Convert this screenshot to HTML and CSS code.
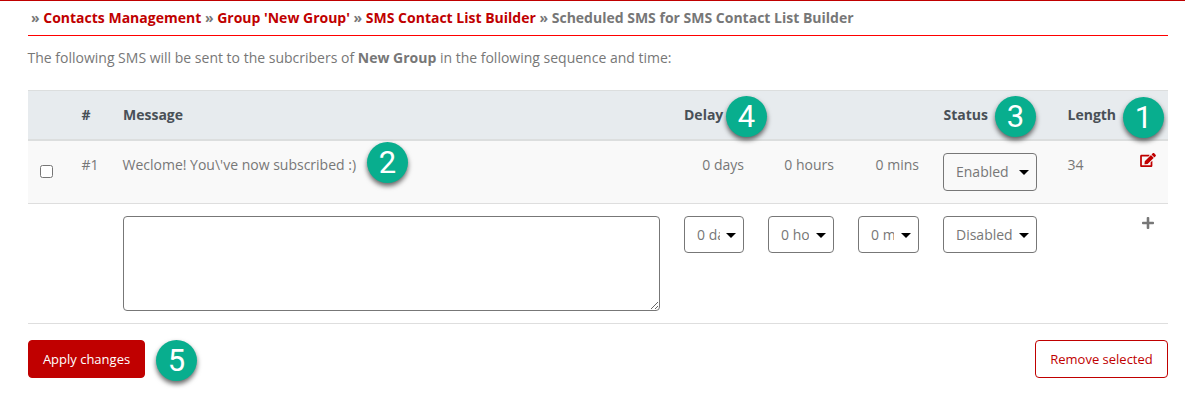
FILE: index.html
```html
<!DOCTYPE html>
<html lang="en">
<head>
<meta charset="utf-8">
<title>Scheduled SMS</title>
<link rel="stylesheet" href="styles.css">
</head>
<body>
<main class="page">
  <nav class="crumbs">» <a>Contacts Management</a> » <a>Group 'New Group'</a> » <a>SMS Contact List Builder</a> » Scheduled SMS for SMS Contact List Builder</nav>
  <p class="intro">The following SMS will be sent to the subcribers of <b>New Group</b> in the following sequence and time:</p>
  <table class="list">
    <colgroup><col class="c-check"><col class="c-num"><col class="c-msg"><col class="c-days"><col class="c-hours"><col class="c-mins"><col class="c-status"><col class="c-len"><col class="c-act"></colgroup>
    <thead>
      <tr><th></th><th>#</th><th>Message</th><th colspan="3">Delay</th><th>Status</th><th>Length</th><th></th></tr>
    </thead>
    <tbody>
      <tr class="row-saved">
        <td><span class="check"></span></td>
        <td>#1</td>
        <td>Weclome! You\'ve now subscribed :)</td>
        <td class="right">0 days</td>
        <td class="right">0 hours</td>
        <td class="right">0 mins</td>
        <td><div class="select select-status tall"><span>Enabled</span></div></td>
        <td>34</td>
        <td class="action"><svg class="edit" viewBox="0 0 576 512"><path d="M402.6 83.2l90.2 90.2c3.800 3.800 3.800 10 0 13.800L274.400 405.600l-92.800 10.300c-12.400 1.400-22.900-9.100-21.500-21.500l10.300-92.800L388.800 83.200c3.800-3.800 10-3.800 13.800 0zm162-22.900l-48.800-48.800c-15.200-15.200-39.900-15.200-55.200 0l-35.400 35.400c-3.800 3.800-3.800 10 0 13.800l90.200 90.200c3.800 3.800 10 3.800 13.800 0l35.400-35.400c15.200-15.300 15.200-40 0-55.200zM384 346.200V448H64V128h229.800c3.200 0 6.200-1.300 8.500-3.500l40-40c7.600-7.600 2.200-20.500-8.500-20.500H48C21.500 64 0 85.500 0 112v352c0 26.500 21.500 48 48 48h352c26.500 0 48-21.500 48-48V306.200c0-10.700-12.900-16-20.500-8.500l-40 40c-2.200 2.300-3.500 5.300-3.500 8.500z"/></svg></td>
      </tr>
      <tr class="row-new">
        <td></td><td></td>
        <td><textarea class="message" aria-label="Message"></textarea></td>
        <td><div class="select select-days"><span>0 days</span></div></td>
        <td><div class="select select-hours"><span>0 hours</span></div></td>
        <td><div class="select select-mins"><span>0 mins</span></div></td>
        <td><div class="select select-status"><span>Disabled</span></div></td>
        <td></td>
        <td class="action"><svg class="plus" viewBox="0 0 448 448"><path d="M416 176H272V32c0-17.700-14.300-32-32-32h-32c-17.700 0-32 14.300-32 32v144H32c-17.700 0-32 14.300-32 32v32c0 17.700 14.300 32 32 32h144v144c0 17.700 14.300 32 32 32h32c17.700 0 32-14.300 32-32V272h144c17.700 0 32-14.300 32-32v-32c0-17.700-14.300-32-32-32z"/></svg></td>
      </tr>
    </tbody>
  </table>
  <div class="buttons"><button class="btn primary">Apply changes</button><button class="btn outline">Remove selected</button></div>
  <span class="badge b1">1</span>
  <span class="badge b2">2</span>
  <span class="badge b3">3</span>
  <span class="badge b4">4</span>
  <span class="badge b5">5</span>
</main>
</body>
</html>
```
FILE: styles.css
```css
* { box-sizing: border-box; }
body { margin: 0; background: #fff; color: #777; font: 14px/24px "Open Sans", "Noto Sans", sans-serif; }
.page { position: relative; height: 413px; border-top: 1px solid #c00000; padding: 0 17px 0 28px; overflow: hidden; }
.crumbs { height: 35px; padding: 5px 0 0 3px; border-bottom: 1px solid #f00; font-weight: 700; white-space: nowrap; }
.crumbs a { color: #c00000; }
.intro { margin: 10px 0 20px; text-indent: -.5px; white-space: nowrap; }
.list { width: 1140px; table-layout: fixed; border-collapse: separate; border-spacing: 0; }
.c-check { width: 42px; }
.c-num { width: 41px; }
.c-msg { width: 561px; }
.c-days { width: 84px; }
.c-hours { width: 90px; }
.c-mins { width: 85px; }
.c-status { width: 124px; }
.c-len { width: 73px; }
.c-act { width: 40px; }
th { height: 51px; padding: 0 12px; border-top: 1px solid #dcdede; border-bottom: 2px solid #dcdede; background: #e7ebee; color: #495057; font-weight: 700; text-align: left; }
td { padding: 12px; border-bottom: 1px solid #dedede; vertical-align: top; white-space: nowrap; }
th:nth-child(2), td:nth-child(2), .row-saved td:nth-child(3) { text-indent: -.5px; }
th:nth-child(n+5), td:nth-child(8) { text-indent: .5px; }
.row-saved td { height: 63px; background: #f9f9f9; }
.row-new td { height: 120px; }
td.right { text-align: right; }
.check { display: block; width: 13px; height: 13px; margin-top: 12px; border: 1px solid #767676; border-radius: 2.5px; background: #fff; }
.select { position: relative; height: 37px; padding: 0 24px 0 12px; border: 1px solid #777; border-radius: 4px; line-height: 36px; }
.select.tall { height: 38px; }
.select span { display: block; overflow: hidden; }
.select::after { content: ""; position: absolute; right: 7px; top: 16px; border: 5px solid transparent; border-top-color: #000; border-bottom: 0; }
.select-days { width: 60px; padding-right: 23px; }
.select-hours { width: 66px; }
.select-mins { width: 61px; }
.select-status { width: 94px; }
.message { display: block; width: 537px; height: 95px; margin: 0; border: 1px solid #777; border-radius: 4px; resize: both; outline: 0; }
.action svg { display: block; }
.edit { width: 16px; height: 14px; fill: #c00000; }
.plus { width: 12px; height: 12px; margin: .5px 0 0 1.5px; fill: #777; }
.buttons { display: flex; justify-content: space-between; margin-top: 16px; }
.btn { height: 38px; padding: 0; border: 1px solid #c00000; border-radius: 4px; font: 13px/20px "Open Sans", sans-serif; }
.primary { width: 117px; background: #c00000; color: #fff; }
.outline { width: 133px; background: #fff; color: #c00000; }
.badge { position: absolute; width: 41px; height: 41px; border-radius: 50%; background: #08ae8e; box-shadow: 0 3px 5px rgba(0,0,0,.6); color: #fff; font: 31px/41px Roboto, "Liberation Sans", sans-serif; text-align: center; }
.b1 { left: 1123px; top: 96px; }
.b2 { left: 367px; top: 141px; }
.b3 { left: 995px; top: 95px; }
.b4 { left: 726px; top: 95px; }
.b5 { left: 156px; top: 339px; }
```
